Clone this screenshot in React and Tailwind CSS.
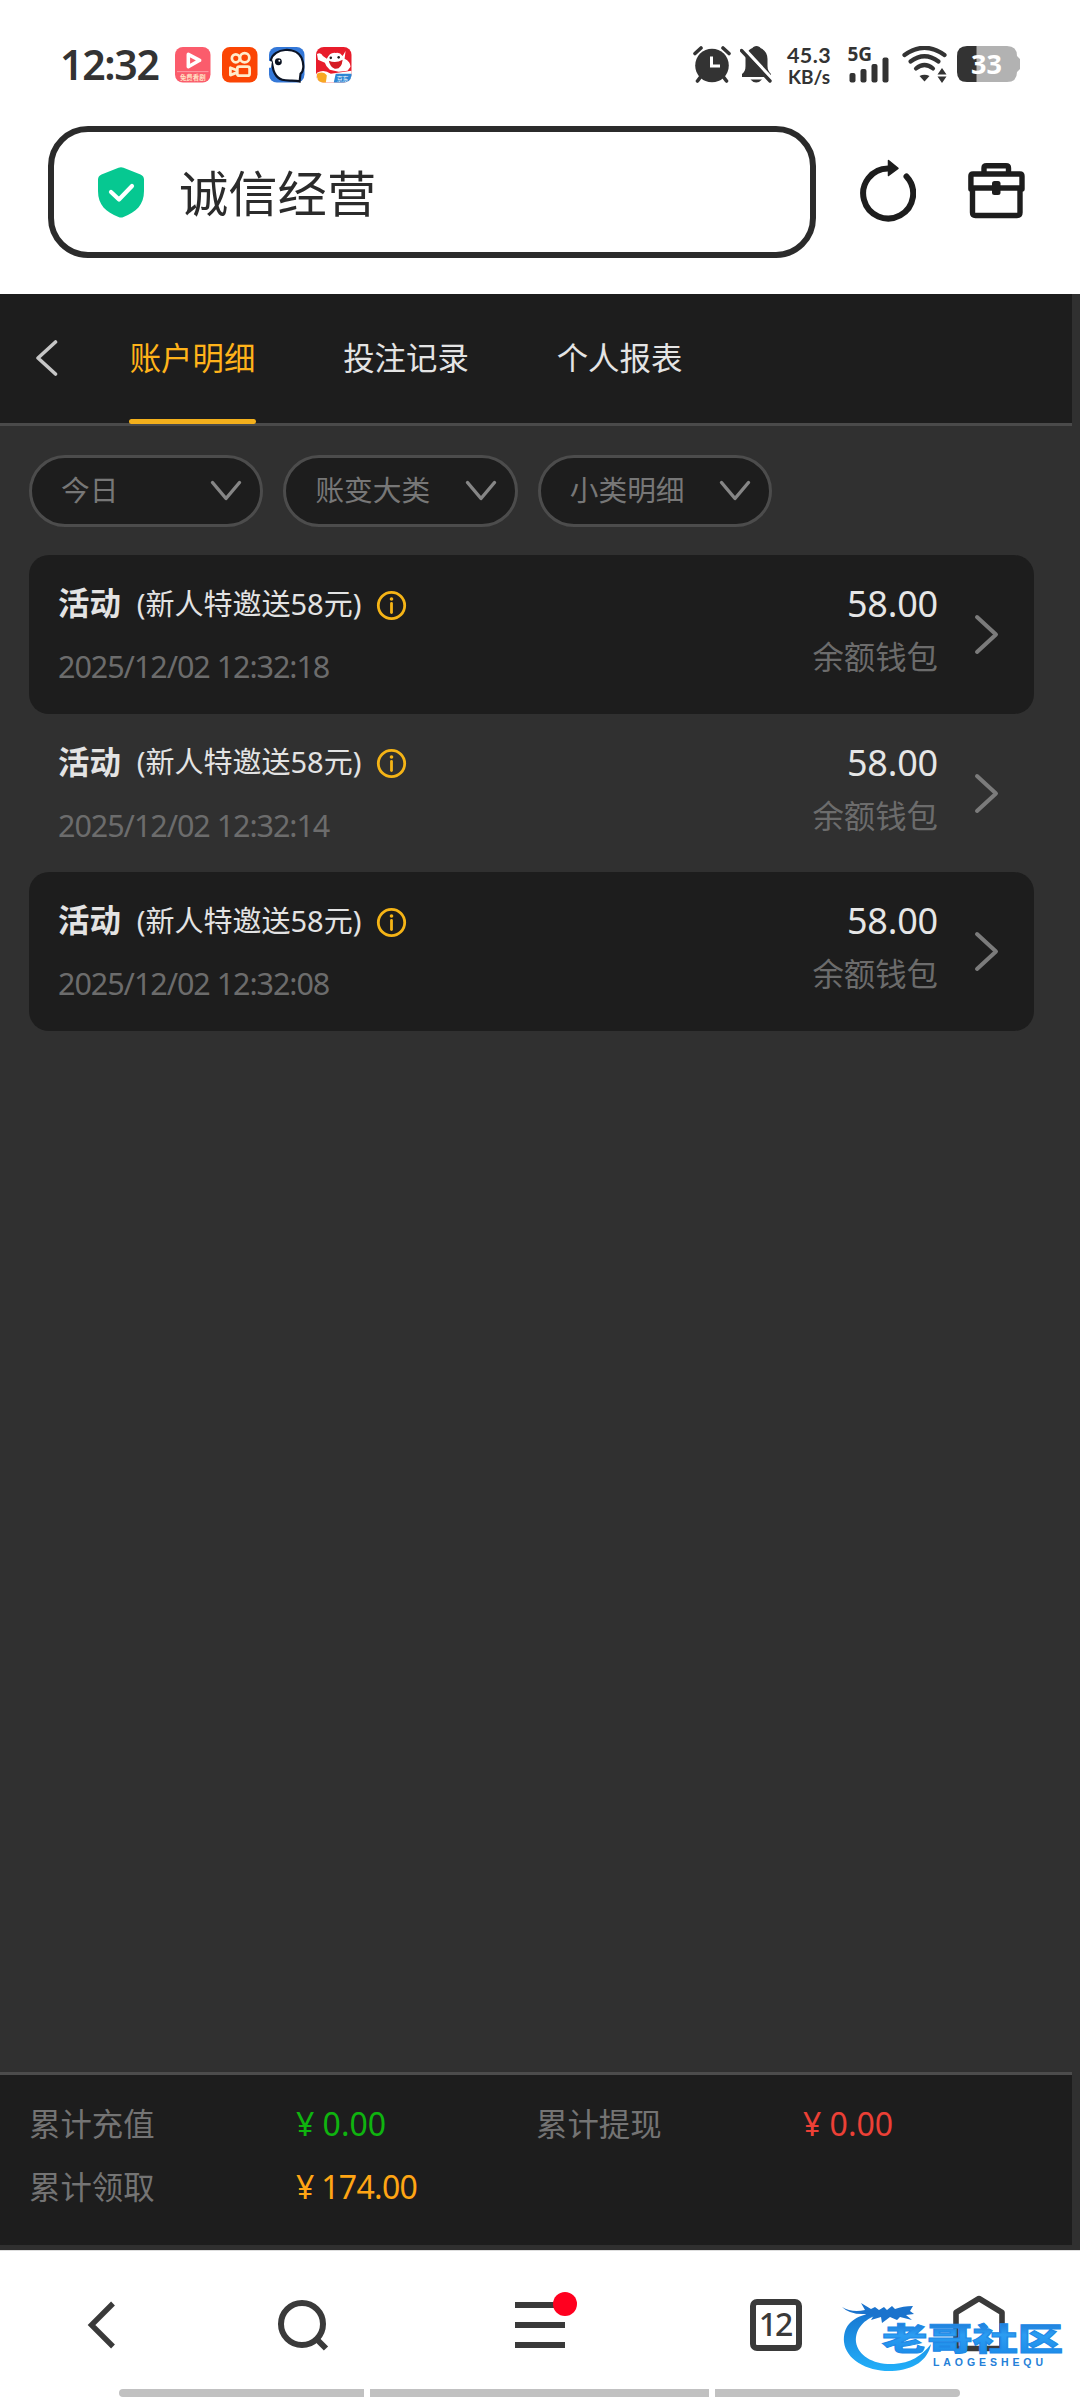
import { useState } from 'react'

const TABS = ['账户明细', '投注记录', '个人报表']
const FILTERS = ['今日', '账变大类', '小类明细']

const RECORDS = [
  { id: 1, type: '活动', note: '(新人特邀送58元)', time: '2025/12/02 12:32:18', amount: '58.00', wallet: '余额钱包' },
  { id: 2, type: '活动', note: '(新人特邀送58元)', time: '2025/12/02 12:32:14', amount: '58.00', wallet: '余额钱包' },
  { id: 3, type: '活动', note: '(新人特邀送58元)', time: '2025/12/02 12:32:08', amount: '58.00', wallet: '余额钱包' },
]

const TOTALS = [
  { label: '累计充值', value: '¥ 0.00', color: 'text-[#0fb40f]' },
  { label: '累计提现', value: '¥ 0.00', color: 'text-[#ec4036]' },
  { label: '累计领取', value: '¥ 174.00', color: 'text-[#ffa514] tracking-[-0.7px]' },
]

export default function App() {
  const [tab, setTab] = useState(0)

  return (
    <div className="flex h-[2400px] w-[1080px] flex-col overflow-hidden bg-white font-['Noto_Sans','Noto_Sans_CJK_SC',sans-serif]">
      <StatusBar />
      <AddressBar />

      <main className="flex h-[1957px] flex-col border-b border-[#dedede] bg-[#303030]">
        {/* Tab bar */}
        <header className="flex h-[132px] w-[1072px] items-stretch border-b-3 border-[#4a4a4a] bg-[#1d1d1d] pl-[35px]">
          <svg className="mt-[46px] h-[36px] w-[24px]" viewBox="0 0 24 36" fill="none" stroke="#c6c6c6" strokeWidth="3.6" strokeLinecap="round" strokeLinejoin="round">
            <path d="M20.5 2 L3 18 L20.5 34" />
          </svg>
          <nav className="ml-[70px] flex gap-[86.5px]">
            {TABS.map((t, i) => (
              <button key={t} onClick={() => setTab(i)}
                className={`flex w-[127px] flex-col items-center justify-between text-[31.4px] leading-[46px] ${
                  tab === i ? 'text-[#ffb31a]' : 'text-[#e4e4e4]'
                }`}>
                <span className="mt-[41px] whitespace-nowrap">{t}</span>
                <span className={`-mb-px h-[5px] w-full rounded-sm ${tab === i ? 'bg-[#f3b01c]' : ''}`} />
              </button>
            ))}
          </nav>
        </header>

        {/* Filters */}
        <div className="ml-[29px] mt-[29px] flex gap-[20px]">
          {FILTERS.map(f => (
            <button key={f} className="flex h-[72px] w-[234.4px] items-center justify-between rounded-full border-3 border-[#4c4c4c] bg-[#1d1d1d] pl-[29px] pr-[18px] text-[28.7px] text-[#777]">
              <span className="-mt-[2px]">{f}</span>
              <svg className="h-[22px] w-[32px]" viewBox="0 0 32 22" fill="none" stroke="#868686" strokeWidth="3.4" strokeLinecap="round" strokeLinejoin="round">
                <path d="M2.500 2.500 L16 18.500 L29.500 2.500" />
              </svg>
            </button>
          ))}
        </div>

        <section className="ml-[29px] mt-[28px] flex w-[1005px] flex-1 flex-col">
          {RECORDS.map((r, i) => <RecordRow key={r.id} record={r} filled={i % 2 === 0} />)}
        </section>

        {/* Totals */}
        <footer className="mb-[5px] grid h-[173px] w-[1072px] grid-cols-[507px_1fr] content-start border-t-3 border-[#4c4c4c] bg-[#1d1d1d] pl-[29px] pt-[17px]">
          {TOTALS.map(t => (
            <div key={t.label} className="flex h-[63px] items-center">
              <span className="w-[267px] text-[31.4px] leading-none text-[#747474]">{t.label}</span>
              <span className={`text-[32px] leading-none ${t.color}`}>{t.value}</span>
            </div>
          ))}
        </footer>
      </main>

      <BottomNav />
    </div>
  )
}

/* ── Record row ──────────────────────────────────────────── */
function RecordRow({ record, filled }) {
  return (
    <div className={`flex h-[158.600px] shrink-0 rounded-[20px] pl-[29px] pr-[34px] ${filled ? 'bg-[#1d1d1d]' : ''}`}>
      <div className="flex flex-1 flex-col pt-[25px]">
        <div className="flex h-[46px] items-center whitespace-nowrap text-[#e3e3e3]">
          <span className="text-[31.4px] font-bold leading-none">{record.type}</span>
          <span className="ml-[16px] text-[29px] leading-none">{record.note}</span>
          <svg className="ml-[15px] mt-[4px] size-[31px]" viewBox="0 0 31 31" fill="none" stroke="#f5b416" strokeWidth="2.8">
            <circle cx="15.500" cy="15.500" r="13.200" />
            <path d="M15.500 13.500 V22.500" strokeLinecap="round" />
            <circle cx="15.500" cy="9" r="1.800" fill="#f5b416" stroke="none" />
          </svg>
        </div>
        <span className="mt-[18px] text-[30.500px] leading-[44px] tracking-[-1.05px] text-[#6c6c6c]">{record.time}</span>
      </div>
      <div className="flex flex-col items-end pt-[24px]">
        <span className="text-[36px] leading-[50px] tracking-[-0.2px] text-[#e6e6e6]">{record.amount}</span>
        <span className="mt-[7px] text-[31.4px] leading-[42px] text-[#6c6c6c]">{record.wallet}</span>
      </div>
      <svg className="ml-[35px] mt-[59px] h-[41px] w-[27px]" viewBox="0 0 27 41" fill="none" stroke="#7b7b7b" strokeWidth="4" strokeLinecap="round" strokeLinejoin="round">
        <path d="M4 3 L23 20.500 L4 38" />
      </svg>
    </div>
  )
}

/* ── System status bar ───────────────────────────────────── */
function StatusBar() {
  return (
    <div className="flex h-[126px] items-start pl-[60px] text-[#333]">
      <span className="mt-[39px] w-[115px] text-[41px] font-semibold leading-[50px] tracking-[-1.3px]">12:32</span>
      <div className="mt-[47px] flex gap-[11.500px]">
        {/* video app */}
        <svg className="size-[35.500px]" viewBox="0 0 36 36">
          <rect width="36" height="36" rx="8" fill="#fb5c6c" />
          <path d="M13.500 7.500 L25 13.500 L13.500 20 Z" fill="#fb5c6c" stroke="#fff" strokeWidth="3.600" strokeLinejoin="round" />
          <path d="M2 25 H34" stroke="#fda0a8" strokeWidth="1" />
          <text x="18" y="33" textAnchor="middle" fontSize="6.500" fontWeight="700" fill="#ffe3c4">免费看剧</text>
        </svg>
        {/* short video app */}
        <svg className="size-[35.500px]" viewBox="0 0 36 36" fill="none" stroke="#ffeccb" strokeWidth="2.800">
          <rect width="36" height="36" rx="8" fill="#fb4504" stroke="none" />
          <circle cx="14" cy="11.500" r="4" />
          <circle cx="23" cy="11" r="4.700" />
          <rect x="15.500" y="20" width="12.500" height="9" rx="2" />
          <path d="M15 23.500 L8.500 21 V28.500 L15 26" strokeLinejoin="round" />
        </svg>
        {/* whale app */}
        <svg className="size-[35.500px]" viewBox="0 0 36 36">
          <rect width="36" height="36" rx="8" fill="#3478d8" />
          <path d="M2 13 C5 1 27 -1 33 11 C36 18 35 25 32 27 L31 35 C24 32 12 38 6 27 C3 22 4 17 2 13 Z" fill="#fff" stroke="#0b1426" strokeWidth="2.200" />
          <circle cx="9.500" cy="15" r="3.500" fill="#08101f" />
          <circle cx="10.500" cy="14" r="1" fill="#fff" />
          <path d="M0 14 L3 15 L2 21 L0 21 Z" fill="#fff" />
        </svg>
        {/* shopping app */}
        <svg className="size-[35.500px]" viewBox="0 0 36 36">
          <rect width="36" height="36" rx="8" fill="#e81c2b" />
          <path d="M1 26 Q8 22 15 27 L36 24 V28 Q36 36 28 36 H8 Q0 36 0 28 Z" fill="#fff" />
          <path d="M1 27 Q8 24 11 29 L10 36 H7 Q0 35 1 27 Z" fill="#f8a824" />
          <path d="M1 7 Q5 5 7 9 L11 12 Q14 5 20 6 Q24 5 27 9 L30 4 L29 12 Q35 15 35 20 L32 24 L23 25 L14 23 Q10 20 9 16 L2 13 Z" fill="#fff" />
          <path d="M13 14 Q20 17 27 13 Q26 23 19 22 Q14 20 13 14 Z" fill="#d51c24" />
          <circle cx="15" cy="11" r="1.300" fill="#222" />
          <circle cx="23" cy="10.500" r="1.300" fill="#222" />
          <path d="M20 27 H36 V29 Q35 36 28 36 H18 Z" fill="#2d86d3" />
          <text x="27" y="34" textAnchor="middle" fontSize="6" fill="#fff">京东</text>
        </svg>
      </div>

      <div className="ml-auto mr-[59px] mt-[46px] flex items-start">
        {/* alarm */}
        <svg className="h-[37px] w-[38px]" viewBox="0 0 38 37">
          <circle cx="19" cy="19.500" r="16.800" fill="#333" />
          <g stroke="#333" strokeWidth="3.600" strokeLinecap="round">
            <path d="M2 7.500 L8 2 M36 7.500 L30 2 M7.500 31 L4.500 35 M30.500 31 L33.500 35" />
          </g>
          <path d="M18.500 10.500 V20 H27" fill="none" stroke="#fff" strokeWidth="3" />
        </svg>
        {/* muted bell */}
        <svg className="ml-[9px] h-[37px] w-[33px]" viewBox="0 0 33 37">
          <path d="M16.500 0 C18.500 0 20 1 20.500 2 C25 4 27.500 8 27.500 13 V20 C27.500 24 29 26 31 28 V31 H2 V28 C4.500 26 5.500 24 5.500 20 V13 C5.500 8 8 4 12.500 2 C13 1 14.500 0 16.500 0 Z" fill="#333" />
          <path d="M10.500 33.500 H22 Q19.500 36.500 16.200 36.500 Q13 36.500 10.500 33.500 Z" fill="#333" />
          <path d="M3.500 2 L34 35" stroke="#fff" strokeWidth="3.500" />
          <path d="M1.500 4.500 L30 35" stroke="#333" strokeWidth="3.400" strokeLinecap="round" />
        </svg>
        <div className="ml-[11px] flex w-[50px] flex-col items-center font-['Lato',sans-serif] font-bold">
          <span className="-mt-[4px] text-[21.500px] leading-[26px] tracking-[0.4px]">45.3</span>
          <span className="-mt-[2px] text-[19px] leading-[22px]">KB/s</span>
        </div>
        {/* signal */}
        <svg className="ml-[14px] h-[37px] w-[42px] overflow-visible" viewBox="0 0 42 37" fill="#333">
          <text x="-0.500" y="14.700" fontSize="19" fontWeight="700">5G</text>
          <rect x="1.500" y="27" width="6" height="9.500" rx="2" />
          <rect x="12.500" y="23" width="6" height="13.500" rx="2" />
          <rect x="23.500" y="18" width="6" height="18.500" rx="2" />
          <rect x="34.500" y="11.500" width="6" height="25" rx="2" />
        </svg>
        {/* wifi */}
        <svg className="ml-[12px] h-[37px] w-[46px]" viewBox="0 0 46 37" fill="none" stroke="#333" strokeWidth="4.200" strokeLinecap="round">
          <path d="M2.500 9 Q22.500 -5.500 42.500 9" />
          <path d="M8.500 15.500 Q22.500 5 36.500 15.500" />
          <path d="M14 22.500 Q22.500 15.500 31 22.500" />
          <path d="M17.500 30 Q22.500 27.500 27.500 30 L22.500 35.500 Z" fill="#333" stroke="none" />
          <path d="M35.500 28.500 L40 22 L44.500 28.500 Z M35.500 30.500 L40 37 L44.500 30.500 Z" fill="#333" stroke="none" />
        </svg>
        {/* battery */}
        <svg className="ml-[9px] h-[37px] w-[64px] overflow-visible" viewBox="0 0 64 37">
          <path d="M19 0 H50 Q60 0 60 10 L63 13 V23 L60 26 Q60 36 50 36 H19 Z" fill="#b2b2b2" />
          <path d="M19.500 0 H10 Q0 0 0 10 V26 Q0 36 10 36 H19.500 Z" fill="#333" />
          <text x="29.500" y="28" textAnchor="middle" fontSize="27" fontWeight="700" fill="#fff">33</text>
        </svg>
      </div>
    </div>
  )
}

/* ── Browser address bar ─────────────────────────────────── */
function AddressBar() {
  return (
    <div className="flex h-[168px] items-start pl-[48px]">
      <div className="flex h-[132px] w-[768px] items-center rounded-[40px] border-6 border-[#2b2b2b] pl-[44px]">
        <svg className="h-[51px] w-[46px]" viewBox="0 0 46 51">
          <path d="M20.500 0.800 Q23 -0.200 25.500 0.800 L42.500 7.500 Q46 9 46 12.500 V24 C46 38 38 45 25.500 50 Q23 51 20.500 50 C8 45 0 38 0 24 V12.500 Q0 9 3.500 7.500 Z" fill="#06c891" />
          <path d="M13 25 L21 32.500 L34 19" fill="none" stroke="#fff" strokeWidth="4.200" strokeLinecap="round" strokeLinejoin="round" />
        </svg>
        <span className="mt-[2px] ml-[35px] text-[49.300px] leading-[70px] text-[#2b2b2b]">诚信经营</span>
      </div>
      <svg className="ml-[44px] mt-[33px] h-[63px] w-[56px]" viewBox="0 0 56 63" fill="none" stroke="#1d1d1d" strokeWidth="6" strokeLinecap="round">
        <path d="M28 9.500 A25 25 0 1 0 46.500 17.500" />
        <path d="M28.500 1.500 L38 9.300 L28.500 16.500 Z" fill="#1d1d1d" strokeWidth="1.500" strokeLinejoin="round" />
      </svg>
      <svg className="ml-[52px] mt-[37px] h-[56px] w-[57px]" viewBox="0 0 57 56" fill="none" stroke="#1d1d1d" strokeWidth="5.400" strokeLinejoin="round">
        <path d="M16 9.500 V5 Q16 2.700 18.500 2.700 H38 Q40.500 2.700 40.500 5 V9.500" />
        <path d="M2.900 26 V13 Q2.900 11 5 11 H52 Q54 11 54 13 V26" strokeLinecap="round" />
        <path d="M3 25 H54" />
        <path d="M4.500 25 V49.500 Q4.500 52.500 7.500 52.500 H49 Q52 52.500 52 49.500 V25" />
        <rect x="24" y="18" width="8.500" height="14" rx="2.500" fill="#1d1d1d" stroke="none" />
      </svg>
    </div>
  )
}

/* ── Browser bottom bar ──────────────────────────────────── */
function BottomNav() {
  return (
    <div className="flex h-[149px] flex-col">
      <div className="flex h-[138px] items-start pl-[87px]">
        <svg className="mt-[50px] h-[48px] w-[30px]" viewBox="0 0 30 48" fill="none" stroke="#3a3a3a" strokeWidth="5.400">
          <path d="M26 2.500 L4.500 24 L26 45.500" />
        </svg>
        <svg className="ml-[160px] mt-[48px] h-[54px] w-[54px]" viewBox="0 0 54 54" fill="none" stroke="#3a3a3a" strokeWidth="6">
          <circle cx="25" cy="25" r="21" />
          <path d="M38.500 39 L49 49.500" />
        </svg>
        <div className="relative ml-[184px] mt-[51px] flex w-[50px] flex-col gap-[14px]">
          <span className="h-[6px] bg-[#3a3a3a]" />
          <span className="h-[6px] bg-[#3a3a3a]" />
          <span className="h-[6px] bg-[#3a3a3a]" />
          <span className="absolute -right-[12px] -top-[10px] size-[24px] rounded-full bg-[#ff001f]" />
        </div>
        <span className="ml-[185px] mt-[48px] flex size-[52px] items-center justify-center rounded-[7px] border-6 border-[#3a3a3a] pb-[3px] pr-[2px] text-[32px] font-medium leading-none tracking-[-2px] text-[#3a3a3a]">
          12
        </span>
        <div className="relative ml-[151px] mt-[43px]">
          <svg className="h-[60px] w-[52px]" viewBox="0 0 52 60" fill="none" stroke="#3a3a3a" strokeWidth="5.600" strokeLinejoin="round">
            <path d="M26 4.500 L49 18.500 V54.500 H3 V18.500 Z" />
          </svg>
          <Watermark />
        </div>
      </div>
      <div className="ml-[119px] flex h-[8px] gap-[6px]">
        <span className="w-[245px] rounded-l-full bg-[#c1c1c1]" />
        <span className="w-[339px] bg-[#c1c1c1]" />
        <span className="w-[245px] rounded-r-full bg-[#c1c1c1]" />
      </div>
    </div>
  )
}

// Community logo laid over the home button
function Watermark() {
  return (
    <svg className="absolute -left-[113px] top-[4px] h-[80px] w-[230px] overflow-visible" viewBox="0 0 230 80">
      <defs>
        <linearGradient id="wm" x1="0" y1="0" x2="0" y2="1">
          <stop offset="0" stopColor="#1767c8" />
          <stop offset="0.450" stopColor="#2b9df2" />
          <stop offset="1" stopColor="#1a88e6" />
        </linearGradient>
        <linearGradient id="wmTail" x1="0" y1="0" x2="0" y2="1">
          <stop offset="0" stopColor="#1878d2" />
          <stop offset="1" stopColor="#22b0fa" />
        </linearGradient>
      </defs>
      {/* dragon: body ring, then head and mane */}
      <path d="M28 16 C10 20 3 30 4 44 C6 62 28 74 52 73 C74 72 88 62 91 46 C82 58 70 65 54 66 C34 67 18 58 16 44 C15 31 24 21 38 17 Z" fill="url(#wmTail)" />
      <path d="M2 9 Q12 15 25 12 L21 5 L31 11 L35 9 L39 12 L44 9 L47 12 L52 8 L55 11 Q63 8 73 8 L70 13 L74 16 L66 17 L72 22 L60 19 L57 22 L50 19 L42 25 L41 19 L31 22 L34 17 L24 19 L26 16 Q10 17 2 9 Z" fill="#1a73cd" />
      <text x="42" y="51" fontSize="38" fontWeight="900" fontFamily="Noto Sans CJK SC, sans-serif" textLength="181" lengthAdjust="spacingAndGlyphs" transform="translate(0 11.500) scale(1 0.800)" fill="url(#wm)" stroke="#2089e6" strokeWidth="1.200">老哥社区</text>
      <text x="93" y="67.500" fontSize="10.500" fontWeight="700" textLength="110" fill="#2580d8" fontFamily="Liberation Sans, sans-serif">LAOGESHEQU</text>
    </svg>
  )
}
